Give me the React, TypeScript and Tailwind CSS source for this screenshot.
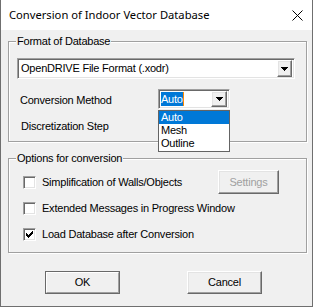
import React from "react";

const sunken =
  "border border-t-[#a0a0a0] border-l-[#a0a0a0] border-r-white border-b-white shadow-[inset_1px_1px_0_#696969,inset_-1px_-1px_0_#e3e3e3]";
const raised =
  "border border-t-white border-l-white border-r-[#696969] border-b-[#696969] shadow-[inset_-1px_-1px_0_#a0a0a0,inset_1px_1px_0_#e3e3e3]";

function Arrow() {
  return (
    <svg width="7" height="4" viewBox="0 0 7 4">
      <path d="M0 0h7v1H0zM1 1h5v1H1zM2 2h3v1H2zM3 3h1v1H3z" fill="#000" />
    </svg>
  );
}

function DropBtn({ w, h }: { w: string; h: string }) {
  return (
    <div className={`${raised} ${w} ${h} bg-[#f0f0f0] flex items-center justify-center`}>
      <Arrow />
    </div>
  );
}

function Group({ title, className, children }: { title: string; className: string; children: React.ReactNode }) {
  return (
    <div
      className={`relative w-[299px] border border-[#a0a0a0] shadow-[inset_1px_1px_0_white,1px_1px_0_white] ${className}`}
    >
      <span className="absolute left-[7px] top-[-8px] bg-[#f0f0f0] px-[1px] leading-[14px]">{title}</span>
      {children}
    </div>
  );
}

function Check({ checked }: { checked?: boolean }) {
  return (
    <div className={`${sunken} w-[13px] h-[13px] bg-white flex items-center justify-center shrink-0`}>
      {checked && (
        <svg width="7" height="7" viewBox="0 0 7 7">
          <path
            d="M0 2h1v3H0zM1 3h1v3H1zM2 4h1v3H2zM3 3h1v3H3zM4 2h1v3H4zM5 1h1v3H5zM6 0h1v3H6z"
            fill="#000"
          />
        </svg>
      )}
    </div>
  );
}

export default function App() {
  return (
    <div
      className="w-[313px] h-[307px] bg-[#f0f0f0] border-l border-r border-b border-[#6f6f6f] text-[11px] tracking-[-0.22px] text-black flex flex-col"
      style={{ fontFamily: '"Liberation Sans", Arial, sans-serif' }}
    >
      <div className="h-[30px] bg-white flex items-center justify-between pl-[8px] pr-[9px] shrink-0">
        <span className="text-[11.2px] tracking-normal text-black" style={{ fontFamily: '"Noto Sans", sans-serif' }}>
          Conversion of Indoor Vector Database
        </span>
        <svg width="11" height="11" viewBox="0 0 11 11">
          <path d="M0.5 0.5L10.5 10.5M10.5 0.5L0.5 10.5" stroke="#000" strokeWidth="1" />
        </svg>
      </div>
      <div className="pl-[7px] flex flex-col">
        <Group title="Format of Database" className="mt-[11px] h-[101px] pt-[16px] pl-[8px]">
          <div className={`${sunken} w-[278px] h-[21px] bg-white flex items-center justify-between pl-[3px] pr-[2px]`}>
            <span>OpenDRIVE File Format (.xodr)</span>
            <DropBtn w="w-[15px]" h="h-[17px]" />
          </div>
          <div className="flex items-center mt-[10px] h-[20px]">
            <span className="w-[141px] pl-[3px] pt-[2px]">Conversion Method</span>
            <div className="relative">
              <div className={`${sunken} w-[72px] h-[20px] bg-white flex items-center justify-between pl-[2px] pr-[2px]`}>
                <span className="flex items-center">
                  <span className="bg-[#0078d7] text-white leading-[14px]">Auto</span>
                  <span className="w-[1px] h-[14px] bg-[#ff8a00]" />
                </span>
                <DropBtn w="w-[16px]" h="h-[16px]" />
              </div>
              <div className="absolute left-0 top-[21px] w-[72px] border border-[#646464] bg-white z-10 flex flex-col">
                <span className="bg-[#0078d7] text-white h-[13px] leading-[13px] pl-[2px]">Auto</span>
                <span className="h-[13px] leading-[13px] pl-[2px]">Mesh</span>
                <span className="h-[13px] leading-[13px] pl-[2px]">Outline</span>
                <span className="h-[1px]" />
              </div>
            </div>
          </div>
          <div className="pl-[4px] mt-[9px]">Discretization Step</div>
        </Group>
        <Group title="Options for conversion" className="mt-[16px] h-[95px] pl-[14px] pt-[11px]">
          <div className="flex items-center h-[24px]">
            <Check />
            <span className="ml-[6px] w-[176px]">Simplification of Walls/Objects</span>
            <div className={`${raised} w-[61px] h-[24px] flex items-center justify-center text-[#a0a0a0]`}>
              Settings
            </div>
          </div>
          <div className="flex items-center h-[13px] mt-[8px]">
            <Check />
            <span className="ml-[6px]">Extended Messages in Progress Window</span>
          </div>
          <div className="flex items-center h-[13px] mt-[13px]">
            <Check checked />
            <span className="ml-[6px]">Load Database after Conversion</span>
          </div>
        </Group>
        <div className="flex mt-[18px] pl-[37px]">
          <div className="w-[75px] h-[23px] border border-[#696969] flex">
            <div className="flex-1 flex items-center justify-center border border-t-white border-l-white border-r-[#a0a0a0] border-b-[#a0a0a0]">
              OK
            </div>
          </div>
          <div className={`${raised} ml-[67px] w-[75px] h-[23px] flex items-center justify-center`}>Cancel</div>
        </div>
      </div>
    </div>
  );
}
